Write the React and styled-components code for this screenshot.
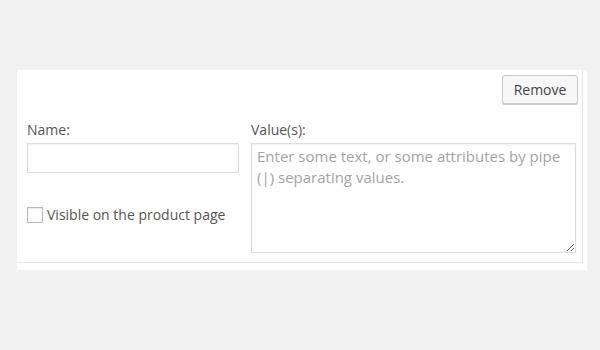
import React from 'react'
import styled, { createGlobalStyle } from 'styled-components';

const Global = createGlobalStyle`
  body {
    margin: 0;
    background: #f1f1f1;
    font-family: "Open Sans", "Liberation Sans", sans-serif;
    font-size: 14px;
    color: #555;
  }
`

const App = () => {
  return (
    <>
      <Global />
      <Page>
        <Outer>
          <Attribute>
            <Header>
              <Button type="button">Remove</Button>
            </Header>
            <Body>
              <Column width="212px">
                <Label>Name:</Label>
                <NameInput type="text" />
                <CheckRow>
                  <Check type="checkbox" />
                  <span>Visible on the product page</span>
                </CheckRow>
              </Column>
              <Column width="325px">
                <Label>Value(s):</Label>
                <Values placeholder="Enter some text, or some attributes by pipe (|) separating values." />
              </Column>
            </Body>
          </Attribute>
        </Outer>
      </Page>
    </>
  )
}

export default App;

const Page = styled.div`
  padding: 70px 0 0 17px;
`
const Outer = styled.div`
  width: 570px;
  background: #fff;
  padding-bottom: 7px;
`
const Attribute = styled.div`
  width: 565px;
  border-right: 1px solid #e5e5e5;
  border-bottom: 1px solid #e5e5e5;
`
const Header = styled.div`
  display: flex;
  justify-content: flex-end;
  padding: 5px 4px 0 0;
  height: 29px;
`
const Button = styled.button`
  height: 29px;
  width: 76px;
  padding: 0;
  font-family: inherit;
  font-size: 14px;
  color: #444;
  background: #f7f7f7;
  border: 1px solid #ccc;
  border-radius: 3px;
  box-shadow: 0 1px 0 #ccc;
  cursor: pointer;
`
const Body = styled.div`
  display: flex;
  gap: 12px;
  padding: 17px 0 9px 10px;
`
const Column = styled.div`
  display: flex;
  flex-direction: column;
  width: ${(p) => p.width};
`
const Label = styled.label`
  line-height: 18px;
  height: 18px;
  margin-bottom: 4px;
`
const NameInput = styled.input`
  box-sizing: border-box;
  width: 100%;
  height: 30px;
  border: 1px solid #ddd;
  box-shadow: inset 0 1px 2px rgba(0, 0, 0, 0.07);
  outline: none;
  font-family: inherit;
`
const CheckRow = styled.label`
  display: flex;
  align-items: center;
  gap: 4px;
  margin-top: 33px;
  line-height: 18px;
`
const Check = styled.input`
  appearance: none;
  margin: 0;
  width: 16px;
  height: 16px;
  border: 1px solid #b4b9be;
  background: #fff;
  box-shadow: inset 0 1px 2px rgba(0, 0, 0, 0.1);
  box-sizing: border-box;
`
const Values = styled.textarea`
  box-sizing: border-box;
  width: 100%;
  height: 110px;
  border: 1px solid #ddd;
  box-shadow: inset 0 1px 2px rgba(0, 0, 0, 0.07);
  outline: none;
  padding: 2px 5px;
  font-family: inherit;
  font-size: 15px;
  line-height: 21px;
  color: #333;
  &::placeholder {
    color: #a4a4a4;
  }
`
